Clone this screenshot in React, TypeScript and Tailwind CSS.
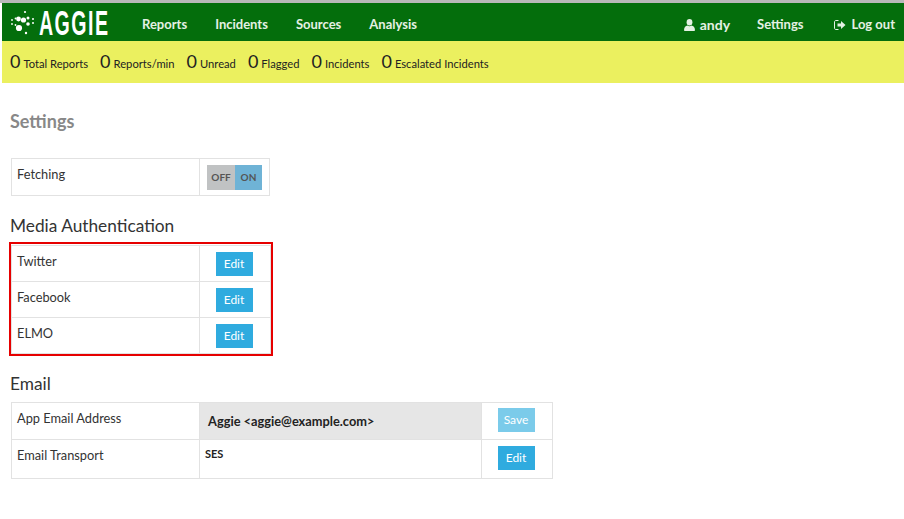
const stats = [
  ['0', 'Total Reports'],
  ['0', 'Reports/min'],
  ['0', 'Unread'],
  ['0', 'Flagged'],
  ['0', 'Incidents'],
  ['0', 'Escalated Incidents'],
];

const navLinks = ['Reports', 'Incidents', 'Sources', 'Analysis'];
const mediaRows = ['Twitter', 'Facebook', 'ELMO'];

const cell = 'border border-[#e2e2e2]';
const labelCell = `${cell} align-top pl-[5px] pt-[6px]`;

function EditButton({ label = 'Edit', faded = false }: { label?: string; faded?: boolean }) {
  return (
    <button
      className={`block mx-auto w-[37px] h-[24px] text-[12px] text-white ${
        faded ? 'bg-[#7bcbea]' : 'bg-[#2fabdf]'
      }`}
    >
      {label}
    </button>
  );
}

function UserIcon() {
  return (
    <svg width="11" height="12" viewBox="0 0 11 12" fill="currentColor" className="mr-[5px]">
      <ellipse cx="5.5" cy="3.2" rx="2.9" ry="3.2" />
      <path d="M0 11.2 C0 8.2 1.8 6.8 3.4 6.6 C4.6 7.4 6.4 7.4 7.6 6.6 C9.2 6.8 11 8.2 11 11.2 C11 11.7 10.6 12 10.2 12 L0.8 12 C0.4 12 0 11.7 0 11.2 Z" />
    </svg>
  );
}

function LogOutIcon() {
  return (
    <svg width="12" height="10" viewBox="0 0 12 10" fill="currentColor" className="ml-[30px] mr-[6px]">
      <path d="M4.5 0.5 L2 0.5 C1 0.5 0.5 1 0.5 2 L0.5 8 C0.5 9 1 9.5 2 9.5 L4.5 9.5" fill="none" stroke="currentColor" />
      <path d="M3.5 3.5 L7 3.5 L7 1 L11.5 5 L7 9 L7 6.5 L3.5 6.5 Z" />
    </svg>
  );
}

function Logo() {
  return (
    <div className="flex items-center">
      <svg width="26" height="26" viewBox="10 12 26 26" fill="white" className="mt-[2px]">
        <circle cx="12" cy="22" r="0.9" />
        <circle cx="12" cy="26" r="0.9" />
        <circle cx="15.5" cy="20.5" r="0.9" />
        <circle cx="15.5" cy="27" r="0.9" />
        <circle cx="18.5" cy="21" r="2.4" />
        <circle cx="19" cy="30" r="3.1" />
        <circle cx="23.5" cy="22" r="2.6" />
        <circle cx="28" cy="20" r="1.5" />
        <circle cx="28" cy="26" r="1.8" />
        <circle cx="25" cy="14" r="1.1" />
        <circle cx="26" cy="35" r="1.2" />
        <circle cx="33" cy="21" r="1" />
        <circle cx="33" cy="25" r="1" />
      </svg>
      <span className="block ml-[3px] w-[70px] whitespace-nowrap text-[35px] leading-none font-bold tracking-[2.6px] font-['Liberation_Sans',sans-serif] scale-x-[0.56] origin-left">
        AGGIE
      </span>
    </div>
  );
}

export default function App() {
  return (
    <div className="w-[904px] h-[519px] bg-white font-['Lato',sans-serif] text-[#333] overflow-hidden">
      <div className="h-[3px] bg-[#b9b9b9]" />
      <nav className="h-[38px] ml-[2px] bg-[#046e0c] text-white flex items-center pl-[8px] pr-[9px]">
        <Logo />
        <div className="flex gap-[28px] ml-[33px] mt-[5px] text-[13px] font-bold text-[#e4f1e4]">
          {navLinks.map((link) => (
            <span key={link}>{link}</span>
          ))}
        </div>
        <div className="ml-auto mt-[5px] flex items-center text-[13px] font-bold text-[#e4f1e4]">
          <UserIcon />
          <span className="text-[14px]">andy</span>
          <span className="ml-[27px]">Settings</span>
          <LogOutIcon />
          <span>Log out</span>
        </div>
      </nav>
      <div className="h-[42px] ml-[2px] bg-[#ebf05f] flex items-center pl-[8px] gap-[12px] text-[#222]">
        {stats.map(([count, label]) => (
          <div key={label} className="flex items-baseline gap-[3px]">
            <span className="text-[18px] leading-none">{count}</span>
            <span className="text-[11.2px]">{label}</span>
          </div>
        ))}
      </div>

      <div className="pl-[11px]">
        <h1 className="mt-[26px] -ml-[1px] text-[18px] leading-[24px] font-bold text-[#888]">Settings</h1>

        <table className="mt-[25px] border-collapse text-[12.8px] w-[259px]">
          <tbody>
            <tr className="h-[37px]">
              <td className={`${labelCell} w-[188px]`}>Fetching</td>
              <td className={`${cell} pl-[7px]`}>
                <div className="flex w-[55px] h-[25px] text-[10px] font-bold text-[#555]">
                  <span className="w-[28px] bg-[#c0c2c3] flex items-center justify-center">OFF</span>
                  <span className="w-[27px] bg-[#6fb3d6] flex items-center justify-center">ON</span>
                </div>
              </td>
            </tr>
          </tbody>
        </table>

        <h2 className="mt-[18px] -ml-[1px] text-[17.3px] leading-[24px]">Media Authentication</h2>

        <div className="mt-[4px] -ml-[2px] w-[264px] border-[2px] border-[#e60000] pt-[1px]">
          <table className="border-collapse text-[12.8px] w-[260px]">
            <tbody>
              {mediaRows.map((row) => (
                <tr key={row} className="h-[36px]">
                  <td className={`${labelCell} w-[188px]`}>{row}</td>
                  <td className={`${cell} pr-[2px]`}>
                    <EditButton />
                  </td>
                </tr>
              ))}
            </tbody>
          </table>
        </div>

        <h2 className="mt-[16px] -ml-[1px] text-[17.3px] leading-[24px]">Email</h2>

        <table className="mt-[6px] border-collapse text-[12.8px] w-[542px]">
          <tbody>
            <tr className="h-[37px]">
              <td className={`${labelCell} w-[188px]`}>App Email Address</td>
              <td className={`${cell} bg-[#e6e6e6] pl-[8px] pt-[2px] w-[282px] font-bold text-[#222]`}>
                {'Aggie <aggie@example.com>'}
              </td>
              <td className={`${cell} align-top pt-[5px] pr-[2px]`}>
                <EditButton label="Save" faded />
              </td>
            </tr>
            <tr className="h-[39px]">
              <td className={labelCell}>Email Transport</td>
              <td className={`${cell} align-top pl-[5px] pt-[6px] text-[11px] font-bold text-[#222]`}>SES</td>
              <td className={`${cell} align-top pt-[6px] pr-[2px]`}>
                <EditButton />
              </td>
            </tr>
          </tbody>
        </table>
      </div>
    </div>
  );
}
